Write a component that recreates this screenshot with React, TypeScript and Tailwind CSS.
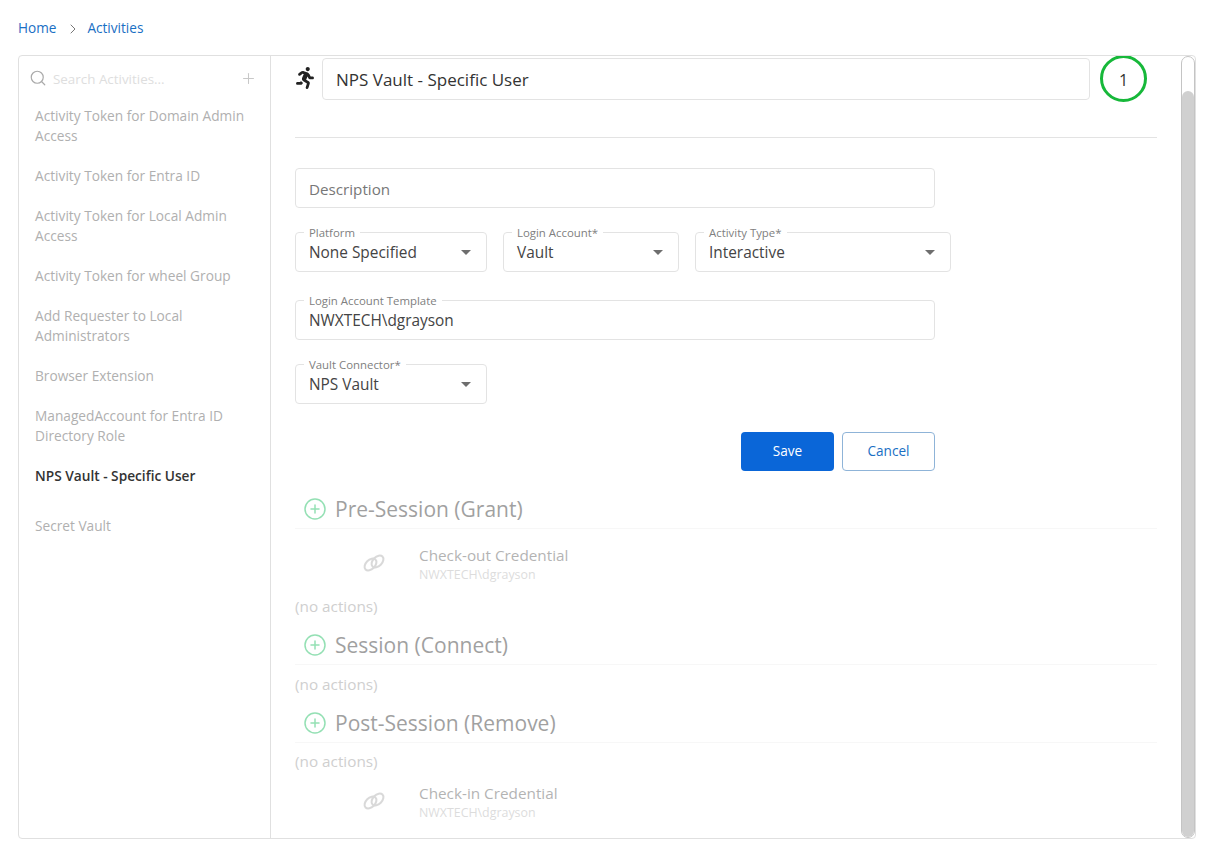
import { ChevronRight, CirclePlus, Plus, Search } from "lucide-react";
import { FaRunning } from "react-icons/fa";
import { MdArrowDropDown } from "react-icons/md";

const activities = [
  ["Activity Token for Domain Admin", "Access"],
  ["Activity Token for Entra ID"],
  ["Activity Token for Local Admin", "Access"],
  ["Activity Token for wheel Group"],
  ["Add Requester to Local", "Administrators"],
  ["Browser Extension"],
  ["ManagedAccount for Entra ID", "Directory Role"],
];

function LinkIcon() {
  return (
    <svg width="24" height="20" viewBox="0 0 24 20" fill="none" stroke="#b5b5b5" strokeWidth="2">
      <ellipse cx="8.5" cy="11.5" rx="7" ry="4.6" transform="rotate(-45 8.5 11.5)" />
      <ellipse cx="15.5" cy="8.5" rx="7" ry="4.6" transform="rotate(-45 15.5 8.5)" />
    </svg>
  );
}

function Field({ label, value, width, select }: { label: string; value: string; width: string; select?: boolean }) {
  return (
    <div className={`relative h-10 rounded border border-[#e3e3e3] pl-[13px] pr-3 flex items-center justify-between ${width}`}>
      <span className="absolute left-[8px] -top-[7px] bg-white px-[5px] text-[11.4px] leading-[14px] text-[#808080]">{label}</span>
      <span className="text-[15.4px] leading-[20px] text-[#444] pt-[1px]">{value}</span>
      {select && <MdArrowDropDown className="text-[#6e6e6e] text-[24px] -mr-[4px]" />}
    </div>
  );
}

function SectionHead({ title }: { title: string }) {
  return (
    <div className="flex items-center h-[39px] pl-2 gap-2 border-b border-[#f0f0f0] opacity-50">
      <CirclePlus size={24} strokeWidth={1.5} className="text-[#2cc36b]" />
      <span className="text-[21px] leading-[30px] text-[#444]">{title}</span>
    </div>
  );
}

function ActionRow({ title }: { title: string }) {
  return (
    <div className="flex items-center h-[42px] pl-[67px]">
      <div className="opacity-50 -mt-[2px]">
        <LinkIcon />
      </div>
      <div className="ml-[33px] opacity-40">
        <div className="text-[15.3px] leading-[21px] text-[#444]">{title}</div>
        <div className="text-[12.4px] leading-[17px] text-[#aaa]">NWXTECH\dgrayson</div>
      </div>
    </div>
  );
}

function NoActions() {
  return <div className="text-[15.3px] leading-[20px] text-[#cfcfcf]">(no actions)</div>;
}

export default function App() {
  return (
    <div className="h-[850px] overflow-hidden bg-white font-['Open_Sans',sans-serif]">
      <div className="flex items-center h-[55px] pl-[18px] pt-[2px] text-[13.6px] text-[#1a6fc4]">
        <span>Home</span>
        <ChevronRight size={16} strokeWidth={1.5} className="ml-[9px] mr-[6px] text-[#777]" />
        <span>Activities</span>
      </div>
      <div className="relative mx-[18px] w-[1178px] h-[784px] flex rounded border border-[#e0e0e0] overflow-hidden">
        <aside className="w-[252px] shrink-0 border-r border-[#e0e0e0]">
          <div className="flex items-center h-[46px] pl-[10px] pr-[13px]">
            <Search size={18} strokeWidth={1.6} className="text-[#aaa] -mt-[2px]" />
            <span className="ml-[6px] flex-1 text-[13.4px] text-[#dedede]">Search Activities...</span>
            <Plus size={17} strokeWidth={1.5} className="text-[#c8c8c8] -mt-[2px]" />
          </div>
          <ul className="pl-4 pt-[4px] flex flex-col gap-5 text-[13.7px] leading-[20px] text-[#b0b0b0]">
            {activities.map((lines) => (
              <li key={lines[0]}>
                {lines.map((l) => (
                  <div key={l}>{l}</div>
                ))}
              </li>
            ))}
            <li className="font-semibold text-[#333]">NPS Vault - Specific User</li>
            <li className="mt-[10px]">Secret Vault</li>
          </ul>
        </aside>
        <main className="flex-1 pl-6 pr-[38px]">
          <div className="flex items-center h-[46px]">
            <FaRunning size={22} className="text-[#222] shrink-0 -ml-[1px] -mt-[3px]" />
            <div className="ml-[6px] w-[768px] h-[42px] rounded border border-[#e3e3e3] flex items-center pl-[13px] pt-[2px] text-[17px] text-[#333]">
              NPS Vault - Specific User
            </div>
            <div className="ml-[10px] -mt-[2px] w-[47px] h-[47px] rounded-full border-[3px] border-[#17b83a] flex items-center justify-center pt-[3px] text-[16px] text-[#333]">
              1
            </div>
          </div>
          <div className="mt-[35px] border-t border-[#e3e3e3]" />
          <div className="mt-[30px] w-[640px] h-10 rounded border border-[#e3e3e3] flex items-center pl-[13px] pt-[2px] text-[15.2px] text-[#777]">
            Description
          </div>
          <div className="mt-6 flex gap-4">
            <Field label="Platform" value="None Specified" width="w-[192px]" select />
            <Field label="Login Account*" value="Vault" width="w-[176px]" select />
            <Field label="Activity Type*" value="Interactive" width="w-[256px]" select />
          </div>
          <div className="mt-7">
            <Field label="Login Account Template" value="NWXTECH\dgrayson" width="w-[640px]" />
          </div>
          <div className="mt-6">
            <Field label="Vault Connector*" value="NPS Vault" width="w-[192px]" select />
          </div>
          <div className="mt-7 w-[640px] flex justify-end gap-2">
            <div className="w-[93px] h-[39px] rounded-sm bg-[#0a66d8] flex items-center justify-center text-[13.6px] font-medium text-white">
              Save
            </div>
            <div className="w-[93px] h-[39px] rounded-sm border border-[#8fb4d8] flex items-center justify-center text-[13.6px] text-[#1a6fc4]">
              Cancel
            </div>
          </div>
          <div className="mt-[19px]">
            <SectionHead title="Pre-Session (Grant)" />
            <div className="mt-[14px]">
              <ActionRow title="Check-out Credential" />
            </div>
            <div className="mt-[11px]">
              <NoActions />
            </div>
            <div className="mt-[10px]">
              <SectionHead title="Session (Connect)" />
            </div>
            <div className="mt-[9px]">
              <NoActions />
            </div>
            <div className="mt-[10px]">
              <SectionHead title="Post-Session (Remove)" />
            </div>
            <div className="mt-[8px]">
              <NoActions />
            </div>
            <div className="mt-[10px]">
              <ActionRow title="Check-in Credential" />
            </div>
          </div>
        </main>
        <div className="absolute right-0 top-0 bottom-0 w-[14px] rounded-full border border-[#c4c4c4] bg-white overflow-hidden">
          <div className="mt-[34px] h-full rounded-full bg-[#d0d0d0]" />
        </div>
      </div>
    </div>
  );
}
